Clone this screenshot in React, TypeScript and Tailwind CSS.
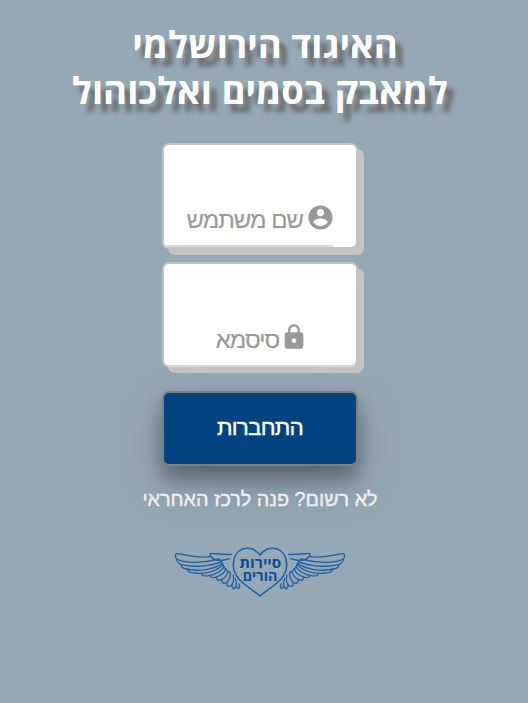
import React from "react";

const sans = "font-['Liberation_Sans',Arial,sans-serif]";

function WingShape() {
  return (
    <g>
      <path d="M356 43 C380 45 402 41 416 40 Q424 42 418 48 C408 62 388 65 363 56" />
      <path d="M418 50 C460 56 490 44 520 41 Q526 43 523 51 C522 60 500 68 465 67 C434 66 412 62 392 57" />
      <path d="M520 58 Q520 68 506 74 C470 83 417 79 384 65" />
      <path d="M506 75 Q508 84 490 87 C452 96 410 88 382 70" />
      <path d="M488 88 Q485 98 466 99 C430 103 400 92 380 74" />
      <path d="M446 101 Q444 110 424 107 C402 104 387 93 376 80" />
      <path d="M420 108 Q414 117 398 110 C385 105 375 96 372 86" />
      <path d="M386 67 C380 78 380 88 359 98" />
      <path d="M400 113 Q400 125 386 119 C374 113 368 103 366 95" />
      <path d="M384 120 Q384 134 371 128 C362 120 359 109 359 99" />
      <path d="M369 129 Q370 143 358 138 C348 130 348 119 350 106" />
      <path d="M354 138 Q352 151 344 143 Q338 133 344 116" />
      <path d="M341 140 Q332 151 331 139 L333 132" />
    </g>
  );
}

function Logo() {
  return (
    <svg className="block h-[62px] w-[180px]" viewBox="0 0 540 186" role="img" aria-label="סיירות הורים">
      <g fill="none" stroke="#22609f" strokeWidth="4" strokeLinecap="round" strokeLinejoin="round">
        <WingShape />
        <g transform="matrix(-1 0 0 1 540 0)">
          <WingShape />
        </g>
        <path strokeWidth="4.6" d="M270 45 C245 10 190 20 190 76 C190 120 236 138 270 168 C304 138 350 120 350 76 C350 20 295 10 270 45Z" />
      </g>
      <g
        className="font-['Open_Sans','Liberation_Sans',sans-serif] font-bold"
        fill="#0d4f99"
        fontSize="42"
        textAnchor="middle"
        direction="rtl"
      >
        <text x="271" y="83" textLength="126" lengthAdjust="spacingAndGlyphs">סיירות</text>
        <text x="270" y="122" textLength="104" lengthAdjust="spacingAndGlyphs">הורים</text>
      </g>
    </svg>
  );
}

function UserIcon() {
  return (
    <svg className="size-[29px] shrink-0" viewBox="0 0 24 24" fill="#999999">
      <path d="M12 2C6.48 2 2 6.48 2 12s4.48 10 10 10 10-4.48 10-10S17.52 2 12 2zm0 3c1.66 0 3 1.34 3 3s-1.34 3-3 3-3-1.34-3-3 1.34-3 3-3zm0 14.2c-2.5 0-4.71-1.28-6-3.22.03-1.99 4-3.08 6-3.08 1.99 0 5.97 1.09 6 3.08-1.29 1.94-3.5 3.22-6 3.22z" />
    </svg>
  );
}

function LockIcon() {
  return (
    <svg className="size-[28px] shrink-0" viewBox="0 0 24 24" fill="#999999">
      <path d="M18 8h-1V6c0-2.76-2.24-5-5-5S7 3.24 7 6v2H6c-1.1 0-2 .9-2 2v10c0 1.1.9 2 2 2h12c1.1 0 2-.9 2-2V10c0-1.1-.9-2-2-2zm-6 9c-1.1 0-2-.9-2-2s.9-2 2-2 2 .9 2 2-.9 2-2 2zm3.1-9H8.900V6c0-1.710 1.390-3.100 3.100-3.100 1.710 0 3.100 1.390 3.100 3.100v2z" />
    </svg>
  );
}

export default function App() {
  return (
    <main dir="rtl" className={`flex h-[703px] w-[528px] flex-col items-center overflow-hidden bg-[#95a8b6] pl-0 pr-2 ${sans}`}>
      <h1 className="mt-[21px] h-[92px] whitespace-nowrap text-center font-['Open_Sans',sans-serif] text-[36.6px] font-bold leading-[46px] text-white [text-shadow:7px_8px_5px_#666666]">
        <span className="block pl-[10px]">האיגוד הירושלמי</span>
        <span className="block">למאבק בסמים ואלכוהול</span>
      </h1>

      <div className="mt-[30px] flex h-[106px] w-[196px] flex-col justify-end rounded-[7px] border-2 border-[#c4c4c4] bg-white shadow-[6px_6px_0_#c4c4c4]">
        <div className="flex h-[42px] items-start gap-[3px] pr-[21px]">
          <UserIcon />
          <span className="mt-[3px] whitespace-nowrap text-[24px] leading-[28px] tracking-[-1px] text-[#999999] [-webkit-text-stroke:0.15px_#999999]">שם משתמש</span>
        </div>
        <div className="mr-[23px] h-[2px] rounded-bl-[4px] bg-[#d9d9d9]" />
      </div>

      <div className="mt-[13px] flex h-[105px] w-[196px] flex-col justify-end rounded-[7px] border-2 border-[#c4c4c4] border-b-[#d9d9d9] bg-white shadow-[6px_6px_0_#c4c4c4]">
        <div className="flex h-[42px] items-start justify-center gap-[1px] pl-[4px]">
          <LockIcon />
          <span className="mt-[3px] whitespace-nowrap text-[24px] leading-[28px] tracking-[-1px] text-[#999999] [-webkit-text-stroke:0.15px_#999999]">סיסמא</span>
        </div>
      </div>

      <button className="mt-[24px] h-[75px] w-[196px] rounded-[7px] border-2 border-[#808080] bg-[#004380] pb-[1px] text-[22.500px] leading-[28px] tracking-[-0.8px] text-white shadow-[0_12px_18px_0_rgba(0,0,0,0.3),0_17px_50px_0_rgba(0,0,0,0.19)] [-webkit-text-stroke:0.4px_white]">
        התחברות
      </button>

      <p className="mt-[21px] h-[24px] whitespace-nowrap text-[19.800px] leading-[24px] text-[#eeeeee] [-webkit-text-stroke:0.4px_#eeeeee]">לא רשום? פנה לרכז האחראי</p>
      <div className="mt-[29px]">
        <Logo />
      </div>
    </main>
  );
}
